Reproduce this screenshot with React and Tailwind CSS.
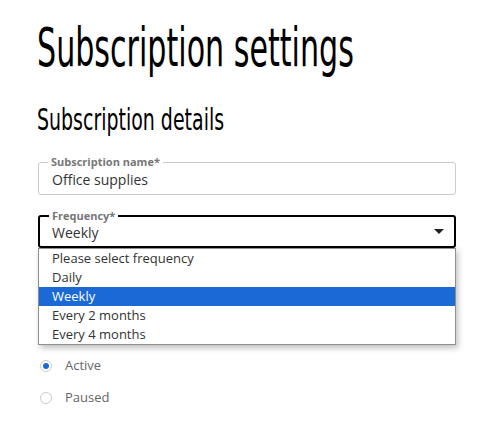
// App.jsx — subscription settings form with the frequency select opened

const options = [
  "Please select frequency",
  "Daily",
  "Weekly",
  "Every 2 months",
  "Every 4 months",
];

function Legend({ children }) {
  return (
    <span className="absolute left-[9px] -top-[8px] bg-white px-[3px] text-[11px] font-bold leading-[14px] text-[#777]">
      {children}
    </span>
  );
}

function Radio({ checked, label }) {
  return (
    <div className="flex items-center h-[32px]">
      <span className="flex items-center justify-center w-[12px] h-[12px] rounded-full border border-[#ccc] bg-white ml-[2px]">
        {checked && <span className="w-[6px] h-[6px] rounded-full bg-[#1a6ad6]" />}
      </span>
      <span className="ml-[13px] text-[13px] text-[#666]">{label}</span>
    </div>
  );
}

export default function App() {
  return (
    <div className="bg-white min-h-[430px] pl-[37px] pr-[43px] pt-[18px]"
      style={{ fontFamily: '"Open Sans", sans-serif' }}>
      {/* Page title */}
      <h1 className="text-[54px] leading-[60px] text-black origin-left scale-x-[0.62] whitespace-nowrap"
        style={{ fontFamily: '"Liberation Sans Narrow", "DejaVu Sans Condensed", "Liberation Sans", sans-serif' }}>
        Subscription settings
      </h1>

      <h2 className="mt-[23px] text-[31px] leading-[36px] text-black origin-left scale-x-[0.68] whitespace-nowrap"
        style={{ fontFamily: '"Liberation Sans Narrow", "DejaVu Sans Condensed", "Liberation Sans", sans-serif' }}>
        Subscription details
      </h2>

      <div className="mt-[25px] flex flex-col gap-[20px] pl-[1px]">
        {/* Subscription name */}
        <div className="relative h-[33px] rounded-[3px] border border-[#ccc] flex items-center px-[13px]">
          <Legend>Subscription name*</Legend>
          <span className="text-[14px] text-[#333] pt-[2px]">Office supplies</span>
        </div>

        {/* Frequency select, opened */}
        <div className="relative">
          <div className="relative h-[33px] rounded-[3px] border-2 border-black flex items-center justify-between pl-[12px] pr-[10px]">
            <Legend>Frequency*</Legend>
            <span className="text-[14px] text-[#333] pt-[2px]">Weekly</span>
            <svg width="10" height="6" viewBox="0 0 10 6"><path d="M0 0h10L5 5z" fill="#222" /></svg>
          </div>
          <ul className="absolute left-0 right-0 top-[33px] z-10 bg-white border border-[#8f8f8f] shadow-[2px_3px_6px_rgba(0,0,0,0.25)] py-0">
            {options.map((o) => (
              <li key={o}
                className={o === "Weekly"
                  ? "h-[19px] leading-[19px] pl-[13px] text-[13px] bg-[#1a69d4] text-white"
                  : "h-[19px] leading-[19px] pl-[13px] text-[13px] text-[#333]"}>
                {o}
              </li>
            ))}
          </ul>
        </div>

        {/* Status radios, partly behind the open list */}
        <div className="pt-[82px] flex flex-col">
          <Radio checked label="Active" />
          <Radio label="Paused" />
        </div>
      </div>
    </div>
  );
}
